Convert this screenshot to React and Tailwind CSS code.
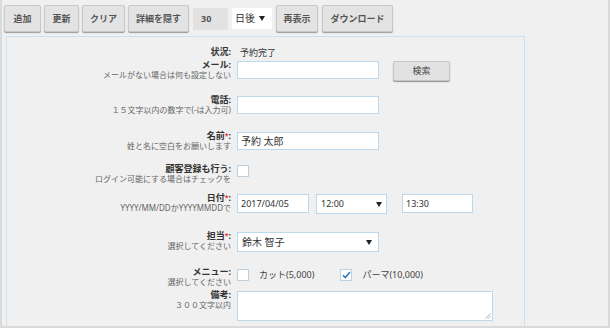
import React from 'react';

const font = { fontFamily: '"Noto Sans", "Noto Sans CJK JP", sans-serif' };

function Btn({ children, className = '' }) {
  return (
    <button
      className={`h-[27px] px-0 whitespace-nowrap flex items-center justify-center rounded-[2px] bg-[#e3e3e3] border border-[#c9c9c9] shadow-[0_1px_1px_#9a9a9a] text-[9px] font-bold text-[#555] ${className}`}
    >
      {children}
    </button>
  );
}

function Arrow() {
  return (
    <svg width="6" height="5" viewBox="0 0 6 5" className="shrink-0">
      <path d="M0 0h6L3 5z" fill="#222" />
    </svg>
  );
}

function Label({ title, sub, req }) {
  return (
    <div className="w-[225px] shrink-0 text-right pr-[1px] -mt-[1px]">
      <div className="text-[9px] leading-[10px] font-bold text-[#333] whitespace-nowrap">
        {title}
        {req && <span className="text-[#e33] text-[7px] align-top">*</span>}:
      </div>
      {sub && <div className="text-[8px] leading-[10px] text-[#666] whitespace-nowrap">{sub}</div>}
    </div>
  );
}

function Row({ children, className = '' }) {
  return <div className={`flex items-start gap-[5px] ${className}`}>{children}</div>;
}

function Input({ value = '', className = '' }) {
  return (
    <div className={`h-[18px] bg-white border border-[#bcd8ec] flex items-center px-[3px] text-[9px] text-[#333] ${className}`}>
      {value}
    </div>
  );
}

function Box({ checked }) {
  return (
    <div className="w-[12px] h-[12px] bg-white border border-[#bcd0e0] flex items-center justify-center">
      {checked && (
        <svg width="9" height="8" viewBox="0 0 9 8">
          <path d="M1 4.2l2.3 2.4L8 1" stroke="#2a78c2" strokeWidth="1.5" fill="none" />
        </svg>
      )}
    </div>
  );
}

export default function App() {
  return (
    <div style={font} className="w-[610px] h-[328px] bg-[#f0f0f0] border-x-2 border-b-2 border-[#dadada] overflow-hidden">
      <div className="flex items-center gap-[3px] pl-[2px] pt-[5px]">
        <Btn className="w-[37px]">追加</Btn>
        <Btn className="w-[35px]">更新</Btn>
        <Btn className="w-[43px]">クリア</Btn>
        <Btn className="w-[61px]">詳細を隠す</Btn>
        <div className="w-[35px] h-[22px] bg-[#e2e2e2] flex items-center px-[8px] text-[9px] font-bold text-[#555] ml-[1px]">30</div>
        <div className="w-[40px] h-[21px] bg-white flex items-center gap-[4px] pl-[3px] text-[10px] text-[#333] ml-[1px] whitespace-nowrap">
          日後 <Arrow />
        </div>
        <Btn className="w-[42px] ml-[1px]">再表示</Btn>
        <Btn className="w-[71px] ml-[1px]">ダウンロード</Btn>
      </div>

      <div className="ml-[4px] mt-[4px] w-[519px] h-[300px] border border-[#c8e1f4] pt-[11px]">
        <Row>
          <Label title="状況" />
          <div className="text-[9px] leading-[9px] text-[#333] pl-[3px]">予約完了</div>
        </Row>

        <Row className="mt-[4px]">
          <Label title="メール" sub="メールがない場合は何も設定しない" />
          <Input className="w-[142px]" />
          <button className="ml-[9px] w-[57px] h-[20px] rounded-[2px] bg-[#e2e2e2] border border-[#c6c6c6] shadow-[0_1px_1px_#8f8f8f] text-[9px] text-[#444]">
            検索
          </button>
        </Row>

        <Row className="mt-[15px]">
          <Label title="電話" sub="１５文字以内の数字で(-は入力可)" />
          <Input className="w-[142px]" />
        </Row>

        <Row className="mt-[17px]">
          <Label title="名前" req sub="姓と名に空白をお願いします" />
          <Input className="w-[142px] text-[10px]" value="予約 太郎" />
        </Row>

        <Row className="mt-[14px]">
          <Label title="顧客登録も行う" sub="ログイン可能にする場合はチェックを" />
          <Box />
        </Row>

        <Row className="mt-[10px]">
          <Label title="日付" req sub="YYYY/MM/DDかYYYYMMDDで" />
          <Input className="w-[72px] h-[19px]" value="2017/04/05" />
          <div className="ml-[2px] w-[71px] h-[20px] bg-white border border-[#bcd8ec] flex items-center justify-between px-[4px] text-[9px] text-[#333]">
            12:00 <Arrow />
          </div>
          <Input className="ml-[10px] w-[71px] h-[19px]" value="13:30" />
        </Row>

        <Row className="mt-[18px]">
          <Label title="担当" req sub="選択してください" />
          <div className="w-[142px] h-[20px] bg-white border border-[#bcd8ec] flex items-center justify-between pl-[4px] pr-[6px] text-[10px] text-[#333]">
            鈴木 智子 <Arrow />
          </div>
        </Row>

        <Row className="mt-[16px]">
          <Label title="メニュー" sub="選択してください" />
          <div className="flex items-center h-[14px]">
            <Box />
            <span className="ml-[10px] text-[9px] text-[#444]">カット(5,000)</span>
            <div className="ml-[26px]"><Box checked /></div>
            <span className="ml-[10px] text-[9px] text-[#444]">パーマ(10,000)</span>
          </div>
        </Row>

        <Row className="mt-[4px]">
          <Label title="備考" sub="３００文字以内" />
          <div className="relative w-[256px] h-[30px] bg-white border border-[#bcd8ec]">
            <svg width="6" height="6" viewBox="0 0 6 6" className="absolute right-[1px] bottom-[1px]">
              <path d="M5.5 0.5L0.5 5.5M5.5 3L3 5.5" stroke="#999" strokeWidth="0.8" />
            </svg>
          </div>
        </Row>
      </div>
    </div>
  );
}
